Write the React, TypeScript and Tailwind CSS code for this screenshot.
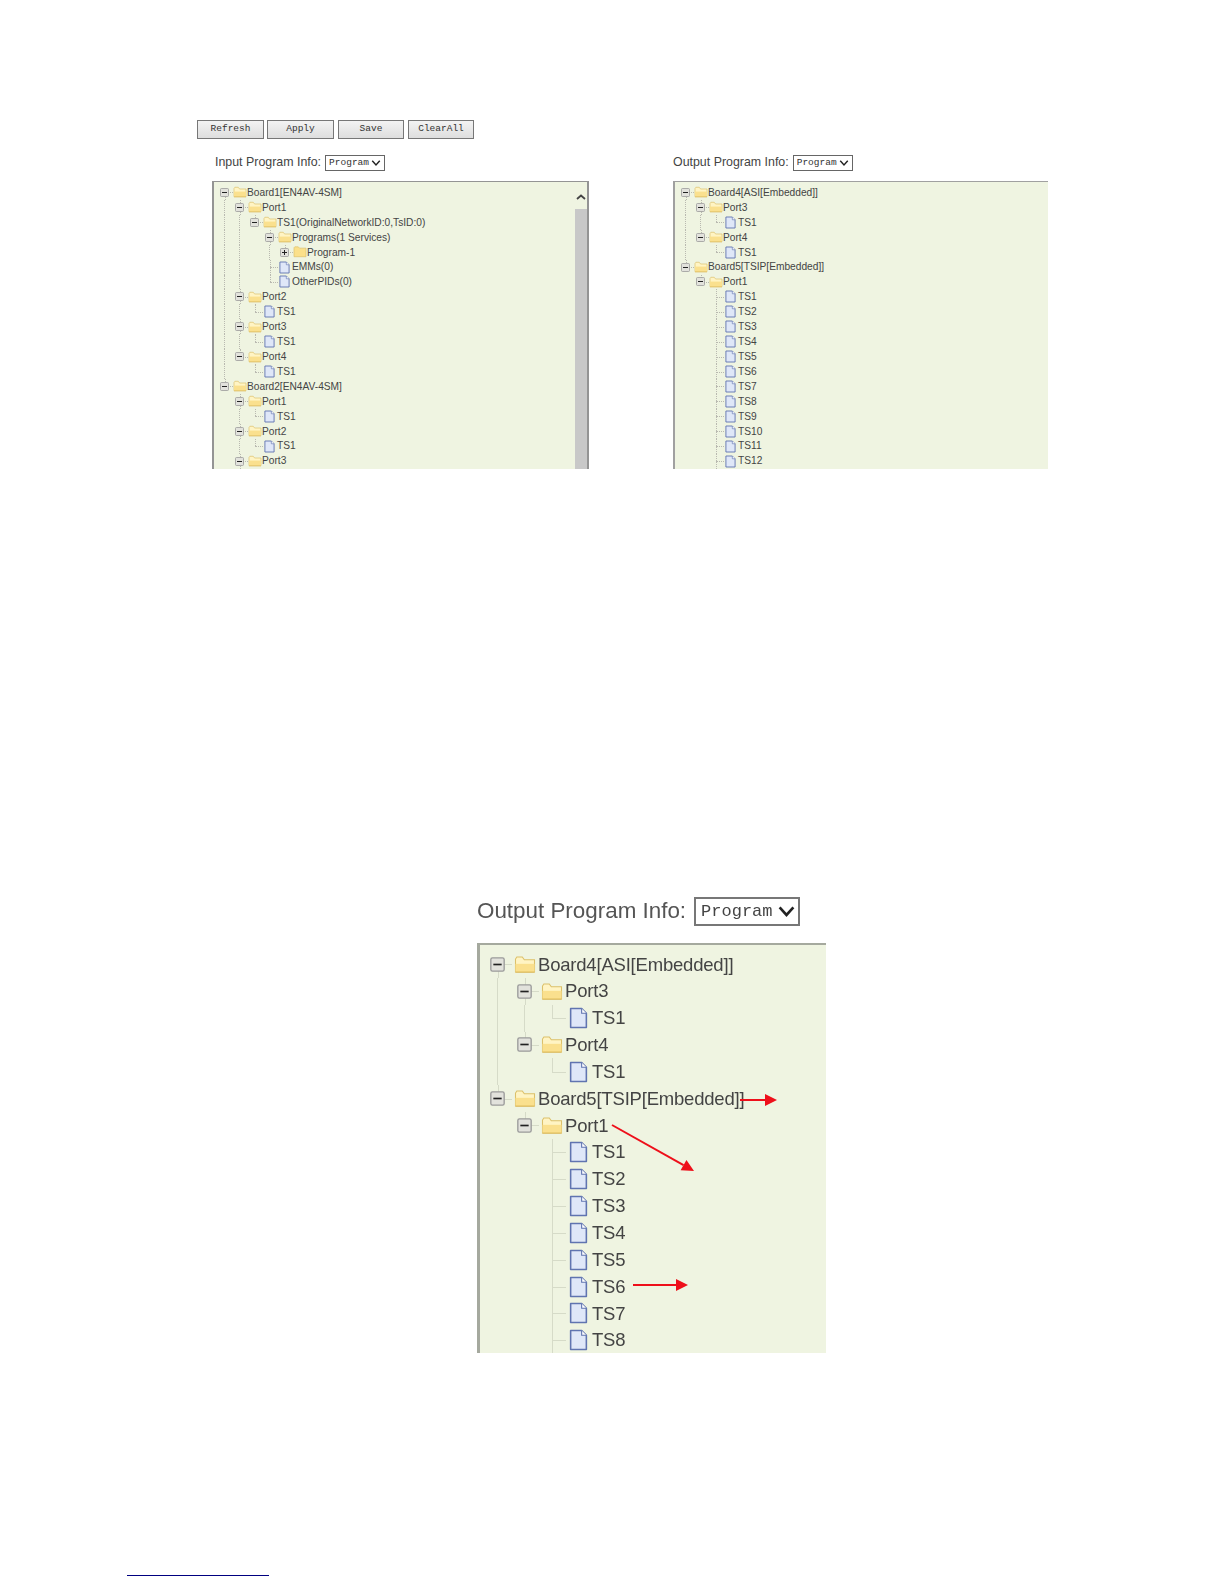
import React from 'react';

type TreeNode = {
  label: string;
  kids?: TreeNode[];
  closed?: boolean;
  // the list goes on below the visible part of the panel
  cut?: boolean;
};

type Size = {
  row: string;
  cell: string;
  text: string;
  folder: string;
  doc: string;
  toggle: string;
  line: string;
  lineV: string;
  lineH: string;
};

const small: Size = {
  row: 'h-[14.93px]',
  cell: 'w-[15px]',
  text: 'text-[10.2px]',
  folder: 'w-[14px] h-[12px]',
  doc: 'w-[11px] h-[13px]',
  toggle: 'w-[9px] h-[9px]',
  line: 'border-[#b9b9b0]',
  lineV: 'border-l border-dotted',
  lineH: 'border-t border-dotted w-[8px]',
};

const big: Size = {
  row: 'h-[26.85px]',
  cell: 'w-[27px]',
  text: 'text-[18.5px] tracking-[-0.2px]',
  folder: 'w-[22px] h-[19px]',
  doc: 'w-[19px] h-[22px]',
  toggle: 'w-[15px] h-[15px]',
  line: 'border-[#d6dbc8]',
  lineV: 'border-l',
  lineH: 'border-t w-[14px]',
};

const ts = (n: number, cutLast = false): TreeNode[] =>
  Array.from({ length: n }, (_, i) => ({
    label: `TS${i + 1}`,
    cut: cutLast && i === n - 1,
  }));

const inputTree: TreeNode[] = [
  {
    label: 'Board1[EN4AV-4SM]',
    kids: [
      {
        label: 'Port1',
        kids: [
          {
            label: 'TS1(OriginalNetworkID:0,TsID:0)',
            kids: [
              {
                label: 'Programs(1 Services)',
                kids: [{ label: 'Program-1', closed: true, kids: [] }],
              },
              { label: 'EMMs(0)' },
              { label: 'OtherPIDs(0)' },
            ],
          },
        ],
      },
      { label: 'Port2', kids: ts(1) },
      { label: 'Port3', kids: ts(1) },
      { label: 'Port4', kids: ts(1) },
    ],
  },
  {
    label: 'Board2[EN4AV-4SM]',
    kids: [
      { label: 'Port1', kids: ts(1) },
      { label: 'Port2', kids: ts(1) },
      { label: 'Port3', kids: [], cut: true },
    ],
  },
];

const outputTree = (count: number): TreeNode[] => [
  {
    label: 'Board4[ASI[Embedded]]',
    kids: [
      { label: 'Port3', kids: ts(1) },
      { label: 'Port4', kids: ts(1) },
    ],
  },
  {
    label: 'Board5[TSIP[Embedded]]',
    kids: [{ label: 'Port1', kids: ts(count, true) }],
  },
];

const FolderIcon = ({ closed, className }: { closed?: boolean; className: string }) => (
  <svg viewBox="0 0 16 14" className={className}>
    {closed ? (
      <path
        d="M1 3V12.5H15V2.5H7.5L6 1H2L1 2Z"
        fill="#fbe08a"
        stroke="#dcc06a"
        strokeWidth="0.8"
      />
    ) : (
      <>
        <path d="M1 3V12.5H15V3.5H7.5L6 1.5H2Z" fill="#fff4c4" stroke="#dcc06a" strokeWidth="0.8" />
        <path d="M1 6.5H15V12.5H1Z" fill="#fae08e" />
        <path d="M1 12.6H15" stroke="#dcb858" strokeWidth="0.8" />
      </>
    )}
  </svg>
);

const DocIcon = ({ className }: { className: string }) => (
  <svg viewBox="0 0 12 14" className={className}>
    <path
      d="M1 1H8L11 4V13H1Z"
      fill="#dfe7f8"
      stroke="#6074b0"
      strokeWidth="1"
      strokeLinejoin="round"
    />
    <path d="M8 1V4H11" fill="#fff" stroke="#6074b0" strokeWidth="0.7" />
  </svg>
);

const Toggle = ({ closed, className }: { closed?: boolean; className: string }) => (
  <svg viewBox="0 0 9 9" className={`relative ${className}`}>
    <rect x="0.5" y="0.5" width="8" height="8" rx="1" fill="#e2e2dc" stroke="#9a9a9a" strokeWidth="0.8" />
    <path d={closed ? 'M2 4.5H7M4.5 2V7' : 'M2 4.5H7'} stroke="#222" strokeWidth="1" />
  </svg>
);

const Row = ({
  node,
  guides,
  hasNext,
  isFirst,
  size,
}: {
  node: TreeNode;
  guides: boolean[];
  hasNext: boolean;
  isFirst: boolean;
  size: Size;
}) => {
  const isFolder = node.kids !== undefined;
  return (
    <div className={`flex items-stretch ${size.row}`}>
      {guides.map((on, i) => (
        <div key={i} className={`flex justify-center shrink-0 ${size.cell}`}>
          {on && <span className={`h-full ${size.lineV} ${size.line}`} />}
        </div>
      ))}
      <div className={`relative flex items-center justify-center shrink-0 ${size.cell}`}>
        {!isFirst && (
          <span
            className={`absolute left-1/2 top-0 ${size.lineV} ${size.line} ${
              hasNext ? 'h-full' : 'h-1/2'
            }`}
          />
        )}
        {isFirst && hasNext && (
          <span className={`absolute left-1/2 top-1/2 h-1/2 ${size.lineV} ${size.line}`} />
        )}
        <span className={`absolute left-1/2 top-1/2 ${size.lineH} ${size.line}`} />
        {isFolder && <Toggle closed={node.closed} className={size.toggle} />}
      </div>
      <div className={`flex items-center justify-center shrink-0 ${size.cell}`}>
        {isFolder ? (
          <FolderIcon closed={node.closed} className={size.folder} />
        ) : (
          <DocIcon className={size.doc} />
        )}
      </div>
      <span className={`flex items-center whitespace-nowrap text-[#444] ${size.text}`}>
        {node.label}
      </span>
    </div>
  );
};

const Branch = ({
  nodes,
  guides,
  size,
}: {
  nodes: TreeNode[];
  guides: boolean[];
  size: Size;
}) => (
  <>
    {nodes.map((node, i) => {
      const hasNext = i < nodes.length - 1 || !!node.cut;
      return (
        <React.Fragment key={node.label + i}>
          <Row node={node} guides={guides} hasNext={hasNext} isFirst={guides.length === 0 && i === 0} size={size} />
          {node.kids && !node.closed && (
            <Branch nodes={node.kids} guides={[...guides, hasNext]} size={size} />
          )}
        </React.Fragment>
      );
    })}
  </>
);

const ToolButton = ({ label, className }: { label: string; className: string }) => (
  <button
    className={`h-[19px] border border-[#777] bg-linear-to-b from-[#f3f3f3] to-[#dedede] font-['Liberation_Mono',monospace] text-[9.5px] text-[#333] ${className}`}
  >
    {label}
  </button>
);

const ProgramSelect = ({ large }: { large?: boolean }) => (
  <div className={`relative shrink-0 ${large ? 'h-[29px] w-[106px]' : 'h-[16px] w-[60px]'}`}>
    <select
      className={
        large
          ? "block h-full w-full appearance-none border-2 border-[#777] bg-white pl-[5px] font-['Liberation_Mono',monospace] text-[17px] text-[#444]"
          : "block h-full w-full appearance-none border border-[#666] bg-white pl-[3px] font-['Liberation_Mono',monospace] text-[9.5px] text-[#333]"
      }
    >
      <option>Program</option>
    </select>
    <svg
      viewBox="0 0 12 8"
      className={`pointer-events-none absolute ${
        large ? 'right-[4px] top-[9px] h-[11px] w-[19px]' : 'right-[4px] top-[5px] h-[6px] w-[10px]'
      }`}
    >
      <path d="M1 1L6 6.5L11 1" fill="none" stroke="#222" strokeWidth="1.9" />
    </svg>
  </div>
);

const ProgramLabel = ({ title }: { title: string }) => (
  <div className="flex h-[15px] items-center gap-[4px]">
    <span className="text-[12.4px] text-[#444]">{title}</span>
    <ProgramSelect />
  </div>
);

const Arrow = ({ x1, y1, x2, y2 }: { x1: number; y1: number; x2: number; y2: number }) => {
  const len = Math.hypot(x2 - x1, y2 - y1);
  const ux = (x2 - x1) / len;
  const uy = (y2 - y1) / len;
  const bx = x2 - ux * 12;
  const by = y2 - uy * 12;
  const head = `${x2},${y2} ${bx - uy * 6},${by + ux * 6} ${bx + uy * 6},${by - ux * 6}`;
  return (
    <>
      <line x1={x1} y1={y1} x2={bx} y2={by} stroke="#ee0f1a" strokeWidth="2" />
      <polygon points={head} fill="#ee0f1a" />
    </>
  );
};

const App = () => {
  return (
    <div className="flex h-[1584px] w-[1224px] flex-col overflow-hidden bg-white font-['Liberation_Sans',sans-serif]">
      <div className="flex gap-[3px] pl-[197px] pt-[120px]">
        <ToolButton label="Refresh" className="w-[67px]" />
        <ToolButton label="Apply" className="w-[67px]" />
        <ToolButton label="Save" className="ml-[1px] w-[66px]" />
        <ToolButton label="ClearAll" className="ml-[1px] w-[66px]" />
      </div>

      <div className="mt-[16px] flex pl-[212px]">
        <div className="w-[461px]">
          <div className="pl-[3px]">
            <ProgramLabel title="Input Program Info:" />
          </div>
          <div className="mt-[11px] flex h-[288px] w-[377px] overflow-hidden border-x-2 border-t border-[#949494] bg-[#eff4e1]">
            <div className="flex-1 overflow-hidden pl-[3px] pt-[3px]">
              <Branch nodes={inputTree} guides={[]} size={small} />
            </div>
            <div className="flex w-[12px] flex-col">
              <div className="flex h-[27px] items-start justify-center pt-[12px]">
                <svg viewBox="0 0 10 6" className="h-[6px] w-[10px]">
                  <path d="M1 5L5 1.5L9 5" fill="none" stroke="#444" strokeWidth="1.8" />
                </svg>
              </div>
              <div className="flex-1 bg-[#c8c8c8]" />
            </div>
          </div>
        </div>

        <div className="w-[375px]">
          <ProgramLabel title="Output Program Info:" />
          <div className="mt-[11px] h-[288px] overflow-hidden border-l-2 border-t border-[#a0a0a0] bg-[#eff4e1] pl-[3px] pt-[3px]">
            <Branch nodes={outputTree(12)} guides={[]} size={small} />
          </div>
        </div>
      </div>

      <div className="relative ml-[477px] mt-[427px] w-[349px] blur-[0.5px]">
        <div className="flex h-[30px] items-center gap-[8px]">
          <span className="text-[22.4px] text-[#555]">Output Program Info:</span>
          <ProgramSelect large />
        </div>
        <div className="mt-[17px] h-[410px] overflow-hidden border-l-[3px] border-t-[2px] border-[#a5a99e] bg-[#eff4e1] pl-[4px] pt-[6px]">
          <Branch nodes={outputTree(8)} guides={[]} size={big} />
        </div>
        <svg viewBox="0 0 349 457" className="absolute left-0 top-0 h-[457px] w-[349px]">
          <Arrow x1={263} y1={204} x2={300} y2={204} />
          <Arrow x1={135} y1={229} x2={217} y2={275} />
          <Arrow x1={156} y1={389} x2={211} y2={389} />
        </svg>
      </div>

      <div className="ml-[127px] mt-[222px] w-[142px] border-b border-[#000080]" />
    </div>
  );
};

export default App;
